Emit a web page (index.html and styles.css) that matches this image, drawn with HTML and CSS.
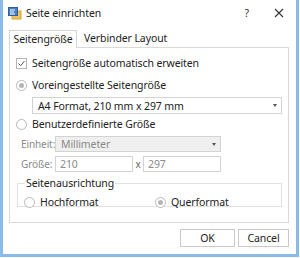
FILE: index.html
```html
<!DOCTYPE html>
<html>
<head>
<meta charset="utf-8">
<link rel="stylesheet" href="styles.css">
</head>
<body>
<div class="window">
  <div class="titlebar">
    <svg class="app-icon" width="14" height="13" viewBox="0 0 14 13">
      <rect x="4" y="4" width="9" height="8" fill="#f2c25a" stroke="#d9a235" stroke-width="1"/>
      <rect x="0.5" y="0.5" width="9" height="8" fill="#4a7fc1" stroke="#2f5f9e" stroke-width="1"/>
      <rect x="2" y="2.5" width="5" height="1" fill="#ffffff"/>
      <rect x="2" y="4.5" width="4" height="1" fill="#ffffff"/>
      <rect x="2" y="6.5" width="5" height="1" fill="#ffffff"/>
    </svg>
    <span class="title">Seite einrichten</span>
    <span class="spacer"></span>
    <span class="tb-help">?</span>
    <svg class="tb-close" width="10" height="10" viewBox="0 0 10 10">
      <path d="M1 1 L9 9 M9 1 L1 9" stroke="#333" stroke-width="1.1"/>
    </svg>
  </div>
  <div class="tabs">
    <div class="tab active">Seitengröße</div>
    <div class="tab">Verbinder Layout</div>
  </div>
  <div class="pane">
    <div class="row check-row">
      <span class="checkbox"><svg width="9" height="9" viewBox="0 0 9 9"><path d="M1.5 4.5 L3.7 6.7 L7.5 2" stroke="#555" stroke-width="1" fill="none"/></svg></span>
      <span>Seitengröße automatisch erweiten</span>
    </div>
    <div class="row radio-row r2">
      <span class="radio checked"><span class="dot"></span></span>
      <span>Voreingestellte Seitengröße</span>
    </div>
    <div class="select preset">
      <span>A4 Format, 210 mm x 297 mm</span>
      <span class="arrow"></span>
    </div>
    <div class="row radio-row r3">
      <span class="radio"></span>
      <span>Benutzerdefinierte Größe</span>
    </div>
    <div class="field-row f1">
      <span class="flabel">Einheit:</span>
      <div class="select unit disabled">
        <span>Millimeter</span>
        <span class="arrow"></span>
      </div>
    </div>
    <div class="field-row f2">
      <span class="flabel">Größe:</span>
      <div class="input w">210</div>
      <span class="times">x</span>
      <div class="input h">297</div>
    </div>
    <fieldset class="group">
      <legend>Seitenausrichtung</legend>
      <div class="orient">
        <div class="row radio-row o1">
          <span class="radio"></span>
          <span>Hochformat</span>
        </div>
        <div class="row radio-row o2">
          <span class="radio checked"><span class="dot"></span></span>
          <span>Querformat</span>
        </div>
      </div>
    </fieldset>
  </div>
  <div class="buttons">
    <div class="btn ok">OK</div>
    <div class="btn cancel">Cancel</div>
  </div>
</div>
</body>
</html>
```

FILE: styles.css
```css
html, body {
  margin: 0;
  padding: 0;
  background: #ffffff;
}
body {
  font-family: "Noto Sans", "Open Sans", sans-serif;
  font-size: 10.5px;
  letter-spacing: -0.1px;
  color: #222;
}
.window {
  width: 299px;
  height: 257px;
  box-sizing: border-box;
  border: 3px solid #8dbbe9;
  border-top: none;
  background: #fff;
  display: flex;
  flex-direction: column;
}
.titlebar {
  height: 26px;
  display: flex;
  align-items: center;
  padding-left: 5px;
  padding-right: 10px;
}
.app-icon {
  margin-right: 4px;
}
.title {
  font-size: 10.5px;
  color: #222;
}
.spacer { flex: 1; }
.tb-help {
  font-size: 10.5px;
  margin-right: 25px;
  color: #333;
}
.tb-close {
  margin-right: 2px;
}
.tabs {
  display: flex;
  align-items: flex-end;
  margin-left: 6px;
  margin-top: 3px;
  height: 18px;
}
.tab {
  height: 17px;
  line-height: 17px;
  padding: 0 7px;
  color: #222;
}
.tab.active {
  border: 1px solid #d5d5d5;
  border-bottom: none;
  background: #fff;
  height: 18px;
  width: 68px;
  box-sizing: border-box;
  padding: 0;
  text-align: center;
  position: relative;
  z-index: 1;
  margin-bottom: -1px;
}
.pane {
  margin-left: 6px;
  width: 280px;
  height: 176px;
  box-sizing: border-box;
  border: 1px solid #dadada;
  padding: 7px 0 0 6px;
  display: flex;
  flex-direction: column;
}
.row {
  display: flex;
  align-items: center;
  height: 14px;
}
.check-row {
  margin-top: 1px;
}
.checkbox {
  width: 9px;
  height: 9px;
  border: 1px solid #b5b5b5;
  box-sizing: content-box;
  display: flex;
  align-items: center;
  justify-content: center;
  margin-right: 5px;
  background: #fff;
}
.checkbox svg { display: block; }
.radio {
  width: 9px;
  height: 9px;
  border: 1px solid #b9b9b9;
  border-radius: 50%;
  margin-right: 5px;
  display: flex;
  align-items: center;
  justify-content: center;
  background: #fff;
}
.radio .dot {
  width: 5px;
  height: 5px;
  border-radius: 50%;
  background: #b5b5b5;
}
.r2 { margin-top: 8px; }
.select {
  display: flex;
  align-items: center;
  justify-content: space-between;
  border: 1px solid #d3d3d3;
  box-sizing: border-box;
  background: #fff;
  padding: 0 4px 0 5px;
}
.preset {
  margin-left: 16px;
  margin-top: 5px;
  width: 250px;
  height: 17px;
  color: #222;
}
.arrow {
  width: 0;
  height: 0;
  border-left: 2.5px solid transparent;
  border-right: 2.5px solid transparent;
  border-top: 3px solid #555;
}
.r3 { margin-top: 3px; }
.field-row {
  display: flex;
  align-items: center;
  color: #8a8a8a;
}
.flabel {
  width: 39px;
  padding-left: 5px;
  box-sizing: border-box;
  color: #8a8a8a;
  font-size: 10px;
  white-space: nowrap;
}
.f1 { margin-top: 5px; }
.f2 { margin-top: 4px; }
.unit {
  width: 166px;
  height: 16px;
  background: #efefef;
  border-color: #d3d3d3;
  color: #8a8a8a;
}
.input {
  height: 16px;
  box-sizing: border-box;
  border: 1px solid #d3d3d3;
  background: #fff;
  padding-left: 4px;
  line-height: 14px;
  color: #8a8a8a;
}
.input.w { width: 78px; }
.input.h { width: 78px; }
.times {
  width: 10px;
  text-align: center;
  color: #666;
  font-size: 10px;
}
.group {
  margin: 6px 0 0 1px;
  width: 265px;
  height: 29px;
  box-sizing: border-box;
  border: 1px solid #e1e1e1;
  padding: 0 0 0 6px;
}
.group legend {
  padding: 0 1px;
  margin-left: 1px;
  color: #222;
  line-height: 10px;
}
.orient {
  display: flex;
  align-items: center;
  margin-top: 7px;
}
.o1 { width: 131px; }
.buttons {
  display: flex;
  justify-content: flex-end;
  gap: 3px;
  padding-right: 7px;
  margin-top: 6px;
}
.btn {
  height: 18px;
  box-sizing: border-box;
  border: 1px solid #c9c9c9;
  background: #fff;
  display: flex;
  align-items: center;
  justify-content: center;
  color: #222;
}
.btn.ok { width: 55px; }
.btn.cancel { width: 51px; }
```
